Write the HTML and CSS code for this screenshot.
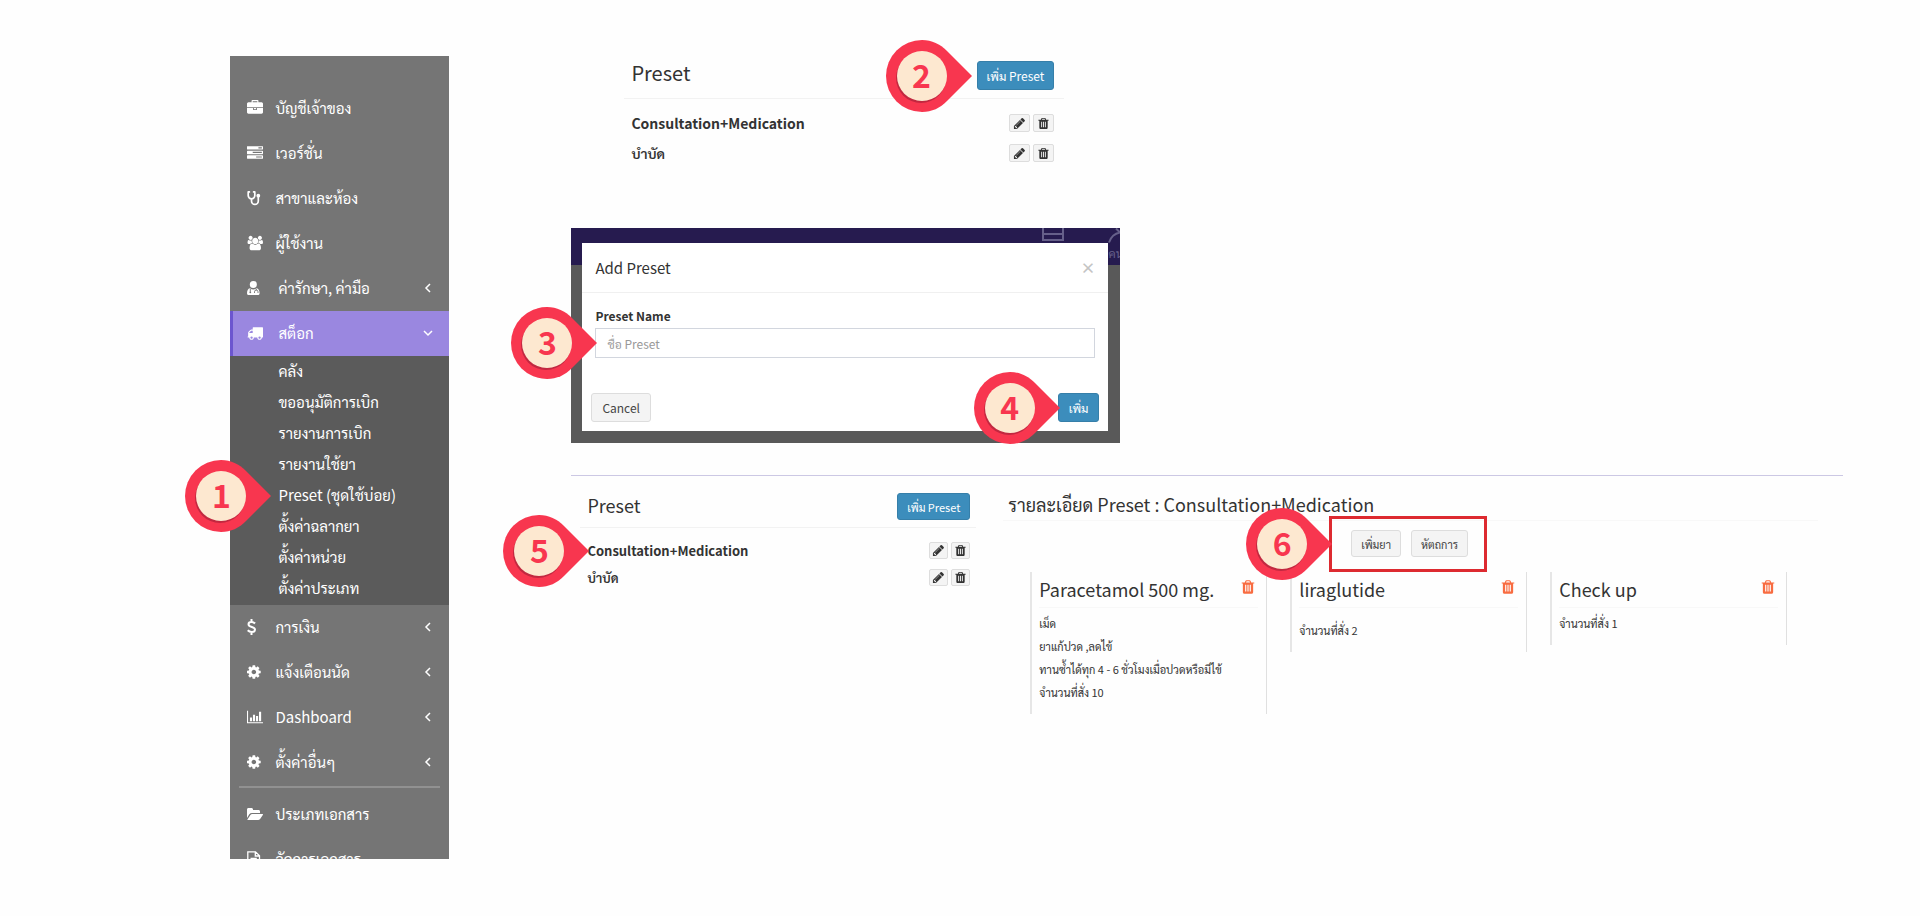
FILE: index.html
```html
<!DOCTYPE html>
<html lang="th">
<head>
    <meta charset="UTF-8">
    <title>Preset</title>
    <link rel="stylesheet" href="styles.css">
</head>
<body>
    <!-- shared icons -->
    <svg class="sprite" aria-hidden="true">
        <symbol id="briefcase" viewBox="0 0 1792 1792"><path d="M640 256h512v-128h-512v128zm1152 640v480q0 66-47 113t-113 47h-1472q-66 0-113-47t-47-113v-480h672v160q0 26 19 45t45 19h320q26 0 45-19t19-45v-160h672zm-768 0v128h-256v-128h256zm768-480v384h-1792v-384q0-66 47-113t113-47h352v-160q0-40 28-68t68-28h576q40 0 68 28t28 68v160h352q66 0 113 47t47 113z"/></symbol>
        <symbol id="tasks" viewBox="0 0 1792 1792"><path d="M1024 1408h640v-128h-640v128zm-384-512h1024v-128h-1024v128zm640-512h384v-128h-384v128zm512 832v256q0 26-19 45t-45 19h-1664q-26 0-45-19t-19-45v-256q0-26 19-45t45-19h1664q26 0 45 19t19 45zm0-512v256q0 26-19 45t-45 19h-1664q-26 0-45-19t-19-45v-256q0-26 19-45t45-19h1664q26 0 45 19t19 45zm0-512v256q0 26-19 45t-45 19h-1664q-26 0-45-19t-19-45v-256q0-26 19-45t45-19h1664q26 0 45 19t19 45z"/></symbol>
        <symbol id="stethoscope" viewBox="0 0 16 16"><path fill="none" stroke="currentColor" stroke-width="1.7" stroke-linecap="round" stroke-linejoin="round" d="M2.4 1.9H1.200V5.500a3.300 3.300 0 0 0 6.600 0V1.900H6.600M4.500 9V11a3.300 3.300 0 0 0 6.800 0V7.500"/><circle cx="11.300" cy="5.700" r="1.900"/></symbol>
        <symbol id="users" viewBox="0 0 1984 1792"><path d="M657 896q-162 5-265 128h-134q-82 0-138-40.500t-56-118.500q0-353 124-353 6 0 43.500 21t97.500 42.500 119 21.500q67 0 133-23-5 37-5 66 0 139 81 256zm1071 637q0 120-73 189.500t-194 69.500h-874q-121 0-194-69.500t-73-189.500q0-53 3.500-103.500t14-109 26.500-108.500 43-97.500 62-81 85.500-53.500 111.500-20q10 0 43 21.500t73 48 107 48 135 21.500 135-21.500 107-48 73-48 43-21.500q61 0 111.500 20t85.500 53.500 62 81 43 97.500 26.500 108.500 14 109 3.500 103.500zm-1024-1277q0 106-75 181t-181 75-181-75-75-181 75-181 181-75 181 75 75 181zm704 384q0 159-112.500 271.500t-271.500 112.500-271.500-112.500-112.500-271.500 112.500-271.500 271.500-112.500 271.500 112.500 112.500 271.500zm576 225q0 78-56 118.500t-138 40.500h-134q-103-123-265-128 81-117 81-256 0-29-5-66 66 23 133 23 59 0 119-21.500t97.500-42.500 43.500-21q124 0 124 353zm-128-609q0 106-75 181t-181 75-181-75-75-181 75-181 181-75 181 75 75 181z"/></symbol>
        <symbol id="doctor" viewBox="0 0 16 16"><circle cx="6.300" cy="4.500" r="3.500"/><path d="M3 8.200C.9 8.600 0 10.600 0 13.200 0 14.500.8 15 2 15h8.600c1.200 0 2-.5 2-1.800 0-2.600-.9-4.600-3-5-1.800 1.600-4.800 1.600-6.600 0z"/><path fill="none" stroke="#757575" stroke-width=".9" d="M3.300 8.800v3M9.300 8.800v1.600M7.500 13v-1.200a1.700 1.700 0 0 1 3.500 0V13"/><circle cx="3.300" cy="12.300" r=".9" fill="#757575"/></symbol>
        <symbol id="truck" viewBox="0 0 1792 1792"><path d="M640 1408q0-52-38-90t-90-38-90 38-38 90 38 90 90 38 90-38 38-90zm-384-512h384v-256h-158q-13 0-22 9l-195 195q-9 9-9 22v30zm1280 512q0-52-38-90t-90-38-90 38-38 90 38 90 90 38 90-38 38-90zm256-1088v1024q0 15-4 26.500t-13.500 18.500-16.500 11.500-23.500 6-22.500 2-25.500 0-22.500-.5q0 106-75 181t-181 75-181-75-75-181h-384q0 106-75 181t-181 75-181-75-75-181h-64q-3 0-22.500.5t-25.500 0-22.500-2-23.500-6-16.500-11.500-13.500-18.500-4-26.500q0-26 19-45t45-19v-320q0-8-.5-35t0-38 2.500-34.500 6.500-37 14-30.500 22.500-30l198-198q19-19 50.500-32t58.500-13h160v-192q0-26 19-45t45-19h1024q26 0 45 19t19 45z"/></symbol>
        <symbol id="dollar" viewBox="0 0 16 16"><path fill="none" stroke="currentColor" stroke-width="2" d="M4.500 0v2.500M4.500 13.500V16M8 4.500C7 3.400 5.800 2.900 4.500 2.900 2.800 2.900 1.500 3.800 1.500 5.200c0 3.400 6.500 2.100 6.500 5.400 0 1.500-1.500 2.500-3.300 2.500-1.500 0-2.900-.6-4-1.800"/></symbol>
        <symbol id="cog" viewBox="128 0 1792 1792"><path d="M1152 896q0-106-75-181t-181-75-181 75-75 181 75 181 181 75 181-75 75-181zm512-109v222q0 12-8 23t-20 13l-185 28q-19 54-39 91 35 50 107 138 10 12 10 25t-9 23q-27 37-99 108t-94 71q-12 0-26-9l-138-108q-44 23-91 38-16 136-29 186-7 28-36 28h-222q-14 0-24.500-8.500t-11.500-21.500l-28-184q-49-16-90-37l-141 107q-10 9-25 9-14 0-25-11-126-114-165-168-7-10-7-23 0-12 8-23 15-21 51-66.500t54-70.500q-27-50-41-99l-183-27q-13-2-21-12.500t-8-23.500v-222q0-12 8-23t19-13l186-28q14-46 39-92-40-57-107-138-10-12-10-24 0-10 9-23 26-36 98.500-107.500t94.500-71.500q13 0 26 10l138 107q44-23 91-38 16-136 29-186 7-28 36-28h222q14 0 24.500 8.500t11.500 21.500l28 184q49 16 90 37l142-107q9-9 24-9 13 0 25 10 129 119 165 170 7 8 7 22 0 12-8 23-15 21-51 66.500t-54 70.500q26 50 41 98l183 28q13 2 21 12.500t8 23.500z"/></symbol>
        <symbol id="chart" viewBox="0 0 18 16"><path d="M0 1h1.200v12.800H18V15H0zM3.300 8.500h2.400v4.300H3.300zM6.700 5.500h2.400v7.300H6.700zM10.100 7h2.400v5.800h-2.400zM13.500 2h2.400v10.800h-2.400z"/></symbol>
        <symbol id="folder" viewBox="0 0 16 16"><path d="M0 12V3.500C0 2.700.6 2 1.500 2h3C5.300 2 6 2.700 6 3.500V4h5.500c.9 0 1.500.6 1.500 1.500V7H5C3.900 7 3 7.400 2.300 8.200zM.6 13.200 3.400 9C3.900 8.300 4.500 8 5.300 8h10c.7 0 .9.400.5 1l-2.700 4c-.5.700-1.200 1-2 1H1C.3 14 .2 13.700.6 13.200z"/></symbol>
        <symbol id="file" viewBox="0 0 16 16"><path fill="none" stroke="currentColor" stroke-width="1.300" d="M.8.800h7.700l4 4v10.400H.8zM8.300.8V5h4M3.500 7.500h6.300M3.500 10h6.300M3.500 12.500h6.300"/></symbol>
        <symbol id="pencil" viewBox="0 0 1792 1792"><path d="M491 1536l91-91-235-235-91 91v107h128v128h107zm523-928q0-22-22-22-10 0-17 7l-542 542q-7 7-7 17 0 22 22 22 10 0 17-7l542-542q7-7 7-17zm-54-192l416 416-832 832h-416v-416zm683 96q0 53-37 90l-166 166-416-416 166-165q36-38 90-38 53 0 91 38l235 234q37 39 37 91z"/></symbol>
        <symbol id="trash" viewBox="0 0 1792 1792"><path d="M704 1376v-704q0-14-9-23t-23-9h-64q-14 0-23 9t-9 23v704q0 14 9 23t23 9h64q14 0 23-9t9-23zm256 0v-704q0-14-9-23t-23-9h-64q-14 0-23 9t-9 23v704q0 14 9 23t23 9h64q14 0 23-9t9-23zm256 0v-704q0-14-9-23t-23-9h-64q-14 0-23 9t-9 23v704q0 14 9 23t23 9h64q14 0 23-9t9-23zm-544-992h448l-48-117q-7-9-17-11h-317q-10 2-17 11zm928 32v64q0 14-9 23t-23 9h-96v948q0 83-47 143.500t-113 60.500h-832q-66 0-113-58.500t-47-141.500v-952h-96q-14 0-23-9t-9-23v-64q0-14 9-23t23-9h309l70-167q15-37 54-63t79-26h320q40 0 79 26t54 63l70 167h309q14 0 23 9t9 23z"/></symbol>
        <symbol id="chevron" viewBox="0 0 10 10"><path fill="none" stroke="currentColor" stroke-width="1.500" d="M7 1 3 5l4 4"/></symbol>
        <symbol id="chevron-down" viewBox="0 0 10 10"><path fill="none" stroke="currentColor" stroke-width="1.500" d="m1 3 4 4 4-4"/></symbol>
        <symbol id="pin" viewBox="0 0 86 72"><path fill="#f8364f" d="M36 0C46 0 54 4 61 11L86 36 61 61C54 68 46 72 36 72A36 36 0 0 1 36 0z"/><circle cx="35" cy="38" r="25" fill="#c22840"/><circle cx="36" cy="36" r="25" fill="#fde8d0"/></symbol>
    </svg>

    <div class="page">
        <nav class="sidebar">
            <ul class="menu">
                <li><a href="#"><svg><use href="#briefcase"/></svg><span>บัญชีเจ้าของ</span></a></li>
                <li><a href="#"><svg><use href="#tasks"/></svg><span>เวอร์ชั่น</span></a></li>
                <li><a href="#"><svg><use href="#stethoscope"/></svg><span>สาขาและห้อง</span></a></li>
                <li><a href="#"><svg><use href="#users"/></svg><span>ผู้ใช้งาน</span></a></li>
                <li><a href="#" class="wide"><svg><use href="#doctor"/></svg><span>ค่ารักษา, ค่ามือ</span><svg class="arrow"><use href="#chevron"/></svg></a></li>
                <li>
                    <a href="#" class="wide active"><svg><use href="#truck"/></svg><span>สต็อก</span><svg class="arrow"><use href="#chevron-down"/></svg></a>
                    <ul class="submenu">
                        <li><a href="#">คลัง</a></li>
                        <li><a href="#">ขออนุมัติการเบิก</a></li>
                        <li><a href="#">รายงานการเบิก</a></li>
                        <li><a href="#">รายงานใช้ยา</a></li>
                        <li class="target"><span class="marker marker-menu"><svg><use href="#pin"/></svg><b>1</b></span><a href="#">Preset (ชุดใช้บ่อย)</a></li>
                        <li><a href="#">ตั้งค่าฉลากยา</a></li>
                        <li><a href="#">ตั้งค่าหน่วย</a></li>
                        <li><a href="#">ตั้งค่าประเภท</a></li>
                    </ul>
                </li>
                <li><a href="#"><svg><use href="#dollar"/></svg><span>การเงิน</span><svg class="arrow"><use href="#chevron"/></svg></a></li>
                <li><a href="#"><svg><use href="#cog"/></svg><span>แจ้งเตือนนัด</span><svg class="arrow"><use href="#chevron"/></svg></a></li>
                <li><a href="#"><svg><use href="#chart"/></svg><span>Dashboard</span><svg class="arrow"><use href="#chevron"/></svg></a></li>
                <li><a href="#"><svg><use href="#cog"/></svg><span>ตั้งค่าอื่นๆ</span><svg class="arrow"><use href="#chevron"/></svg></a></li>
                <li class="separated"><a href="#"><svg><use href="#folder"/></svg><span>ประเภทเอกสาร</span></a></li>
                <li class="cut"><a href="#"><svg><use href="#file"/></svg><span>จัดการเอกสาร</span></a></li>
            </ul>
        </nav>

        <main>
            <section class="panel panel-top">
                <header>
                    <h2>Preset</h2>
                    <div class="target"><span class="marker"><svg><use href="#pin"/></svg><b>2</b></span><button class="btn primary">เพิ่ม Preset</button></div>
                </header>
                <ul class="presets">
                    <li><strong>Consultation+Medication</strong><button class="icon-btn" aria-label="Edit"><svg><use href="#pencil"/></svg></button><button class="icon-btn" aria-label="Delete"><svg><use href="#trash"/></svg></button></li>
                    <li><strong>บำบัด</strong><button class="icon-btn" aria-label="Edit"><svg><use href="#pencil"/></svg></button><button class="icon-btn" aria-label="Delete"><svg><use href="#trash"/></svg></button></li>
                </ul>
            </section>

            <section class="backdrop">
                <div class="topbar">
                    <svg class="topbar-list" viewBox="0 0 24 16"><path d="M1 0v12h20V0M1 6h20"/></svg>
                    <div class="topbar-user"><svg viewBox="0 0 12 14"><path d="M12 4C7 5 3 8 1 14M8 0l4 4"/></svg><span>คน</span></div>
                </div>
                <form class="modal">
                    <header>
                        <h3>Add Preset</h3>
                        <button type="button" class="close" aria-label="Close">×</button>
                    </header>
                    <div class="field">
                        <label for="preset-name">Preset Name</label>
                        <div class="target"><span class="marker marker-input"><svg><use href="#pin"/></svg><b>3</b></span><input type="text" id="preset-name" placeholder="ชื่อ Preset"></div>
                    </div>
                    <footer>
                        <button type="button" class="btn">Cancel</button>
                        <div class="target"><span class="marker marker-input"><svg><use href="#pin"/></svg><b>4</b></span><button type="button" class="btn primary">เพิ่ม</button></div>
                    </footer>
                </form>
            </section>

            <section class="result">
                <div class="panel panel-small">
                    <header>
                        <h2>Preset</h2>
                        <button class="btn primary">เพิ่ม Preset</button>
                    </header>
                    <ul class="presets">
                        <li class="target"><span class="marker marker-input"><svg><use href="#pin"/></svg><b>5</b></span><strong>Consultation+Medication</strong><button class="icon-btn" aria-label="Edit"><svg><use href="#pencil"/></svg></button><button class="icon-btn" aria-label="Delete"><svg><use href="#trash"/></svg></button></li>
                        <li><strong>บำบัด</strong><button class="icon-btn" aria-label="Edit"><svg><use href="#pencil"/></svg></button><button class="icon-btn" aria-label="Delete"><svg><use href="#trash"/></svg></button></li>
                    </ul>
                </div>

                <div class="detail">
                    <h2>รายละเอียด Preset : Consultation+Medication</h2>
                    <div class="actions target">
                        <span class="marker"><svg><use href="#pin"/></svg><b>6</b></span>
                        <button class="btn">เพิ่มยา</button>
                        <button class="btn">หัตถการ</button>
                    </div>
                    <div class="cards">
                        <article class="card">
                            <header><h3>Paracetamol 500 mg.</h3><button class="remove" aria-label="Delete"><svg><use href="#trash"/></svg></button></header>
                            <p>เม็ด</p>
                            <p>ยาแก้ปวด ,ลดไข้</p>
                            <p>ทานซ้ำได้ทุก 4 - 6 ชั่วโมงเมื่อปวดหรือมีไข้</p>
                            <p>จำนวนที่สั่ง 10</p>
                        </article>
                        <article class="card roomy">
                            <header><h3>liraglutide</h3><button class="remove" aria-label="Delete"><svg><use href="#trash"/></svg></button></header>
                            <p>จำนวนที่สั่ง 2</p>
                        </article>
                        <article class="card">
                            <header><h3>Check up</h3><button class="remove" aria-label="Delete"><svg><use href="#trash"/></svg></button></header>
                            <p>จำนวนที่สั่ง 1</p>
                        </article>
                    </div>
                </div>
            </section>
        </main>
    </div>
</body>
</html>
```

FILE: styles.css
```css
* {
    margin: 0;
    padding: 0;
    box-sizing: border-box;
}

body {
    font-family: "Noto Sans CJK SC", "Sarabun", "Noto Sans Thai Looped", "Loma", "Noto Sans Thai", "Noto Sans", sans-serif;
    font-size: 14px;
    line-height: 20px;
    color: #333;
    background: #fefefe;
}

ul {
    list-style: none;
}

a {
    color: inherit;
    text-decoration: none;
}

button, input {
    font: inherit;
    color: inherit;
}

svg {
    display: block;
    fill: currentColor;
}

.sprite {
    display: none;
}

h2, h3 {
    font-size: 20px;
    line-height: 24px;
    font-weight: 400;
}

.page {
    display: grid;
    grid-template-columns: 219px 1fr;
    gap: 122px;
    align-items: start;
    padding: 56px 4% 56px 12%;
}

/* numbered markers */
.target {
    position: relative;
}

.marker {
    position: absolute;
    right: 100%;
    top: 50%;
    width: 86px;
    height: 72px;
    margin-right: 5px;
    transform: translateY(-50%);
    z-index: 2;
}

.marker svg {
    width: 86px;
    height: 72px;
}

.marker b {
    position: absolute;
    inset: 0 14px 0 0;
    font-size: 32px;
    line-height: 68px;
    text-align: center;
    color: #f8364f;
}

.marker-menu {
    right: auto;
    left: -45px;
}

.marker-input {
    margin-right: -2px;
}

.actions .marker {
    margin-right: 0;
}

/* sidebar */
.sidebar {
    padding-top: 30px;
    font-size: 15px;
    color: #fff;
    background: #757575;
}

.menu a {
    display: flex;
    align-items: center;
    height: 45px;
    padding: 0 16px 2px 17px;
}

.menu a svg {
    width: 16px;
    height: 16px;
    margin-right: 12px;
}

.menu a.wide svg:first-child {
    margin-right: 15px;
}

.menu a .arrow {
    width: 10px;
    height: 10px;
    margin: 0 0 0 auto;
}

.menu a.active {
    padding-left: 14px;
    border-left: 3px solid #6c56cf;
    background: #9a87e0;
}

.submenu {
    padding-bottom: 1px;
    background: #5b5b5b;
}

.submenu a {
    height: 31px;
    padding: 0 0 2px 48px;
}

.separated {
    margin: 1px 9px 0;
    padding-top: 4px;
    border-top: 2px solid #919191;
}

.separated a {
    padding-left: 8px;
}

.cut {
    height: 22px;
    overflow: hidden;
}

/* buttons */
.btn {
    height: 29px;
    padding: 0 9px;
    font-size: 12px;
    color: #444;
    background: #f4f4f4;
    border: 1px solid #ddd;
    border-radius: 3px;
    cursor: pointer;
}

.btn.primary {
    color: #fff;
    background: #3c8dbc;
    border-color: #367fa9;
}

.icon-btn {
    display: flex;
    align-items: center;
    justify-content: center;
    width: 21px;
    height: 18px;
    margin-left: 3px;
    background: #f4f4f4;
    border: 1px solid #ddd;
    border-radius: 2px;
    cursor: pointer;
}

.icon-btn svg {
    width: 13px;
    height: 13px;
}

/* preset lists */
.panel header {
    display: flex;
    justify-content: space-between;
    align-items: flex-start;
    padding: 5px 10px 8px 7px;
    border-bottom: 1px solid #f2f2f2;
}

.presets {
    padding: 9px 10px 0 7px;
}

.presets li {
    display: flex;
    align-items: center;
    height: 30px;
}

.presets strong {
    flex: 1;
    font-weight: 600;
}

.panel-top {
    max-width: 440px;
    margin-left: 53px;
}

.panel-small header {
    padding: 18px 6px 7px 7px;
}

.panel-small .btn {
    height: 27px;
    font-size: 11px;
}

.panel-small .presets {
    padding-right: 6px;
}

.panel-small .presets li {
    height: 27px;
    font-size: 13px;
}

.panel-small .icon-btn {
    width: 19px;
    height: 17px;
}

/* dialog */
.backdrop {
    max-width: 549px;
    margin-top: 60px;
    padding: 15px 12px 12px 11px;
    position: relative;
    background: #595959;
}

.topbar {
    position: absolute;
    inset: 0 0 auto 0;
    height: 37px;
    color: #66608a;
    background: #261b4f;
    overflow: hidden;
}

.topbar svg {
    fill: none;
    stroke: currentColor;
    stroke-width: 2;
}

.topbar-list {
    position: absolute;
    right: 54px;
    width: 24px;
    height: 16px;
}

.topbar-user {
    position: absolute;
    top: 0;
    left: 537px;
    font-size: 12px;
}

.topbar-user svg {
    width: 12px;
    height: 15px;
}

.modal {
    position: relative;
    background: #fff;
}

.modal header {
    display: flex;
    justify-content: space-between;
    align-items: center;
    height: 50px;
    padding: 0 13px;
    border-bottom: 1px solid #f0f0f0;
}

.modal h3 {
    font-size: 15px;
}

.close {
    font-size: 15px;
    font-weight: 600;
    color: #c4c4c4;
    background: none;
    border: none;
    cursor: pointer;
}

.field {
    padding: 12px 13px 0;
}

.field label {
    display: block;
    margin-bottom: 1px;
    font-size: 12px;
    font-weight: 600;
    line-height: 22px;
}

.field input {
    display: block;
    width: 100%;
    height: 30px;
    padding: 0 11px;
    font-size: 12px;
    background: #fff;
    border: 1px solid #d2d6de;
}

.field input::placeholder {
    color: #999;
}

.modal footer {
    display: flex;
    justify-content: space-between;
    padding: 35px 9px 9px;
}

.modal .btn {
    padding: 0 10px;
}

/* preset details */
.result {
    display: grid;
    grid-template-columns: 396fr 815fr;
    gap: 27px;
    margin-top: 32px;
    padding: 0 25px 0 9px;
    position: relative;
}

.result::before {
    content: "";
    position: absolute;
    inset: 0 0 auto 0;
    border-top: 1px solid #ccc8e4;
}

.detail h2 {
    padding: 17px 5px 4px;
    border-bottom: 1px solid #f8f8f8;
}

.panel-small h2, .detail h2 {
    font-size: 18px;
}

.actions {
    display: flex;
    gap: 10px;
    width: fit-content;
    margin: -5px 0 0 40%;
    padding: 11px 16px 12px 19px;
    border: 3px solid #dd2a30;
}

.actions .btn {
    height: 27px;
    font-size: 11px;
}

.cards {
    display: grid;
    grid-template-columns: repeat(3, 1fr);
    gap: 23px;
    align-items: start;
    padding: 0 31px 0 27px;
}

.card {
    padding: 0 8px 10px 7px;
    border-left: 2px solid #e6e6e6;
    border-right: 1px solid #e0e0e0;
    font-size: 11px;
}

.card header {
    display: flex;
    justify-content: space-between;
    height: 36px;
    padding: 5px 2px 0 0;
    margin-bottom: 4px;
    border-bottom: 1px solid #f8f8f8;
}

.card h3 {
    font-size: 18px;
}

.card p {
    line-height: 23px;
}

.card.roomy p {
    padding-top: 7px;
}

.remove {
    width: 16px;
    height: 20px;
    color: #f86c41;
    background: none;
    border: none;
    cursor: pointer;
}

.remove svg {
    width: 16px;
    height: 16px;
}
```
